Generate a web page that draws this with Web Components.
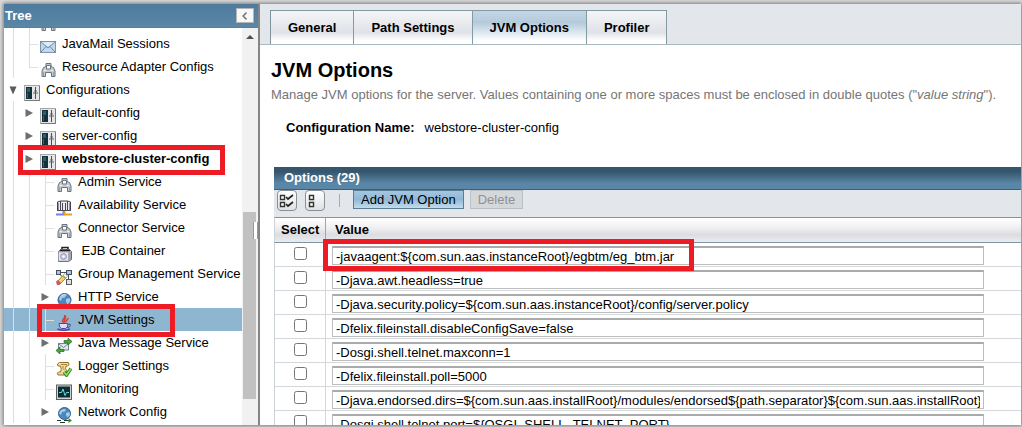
<!DOCTYPE html>
<html lang="en">
<head>
<meta charset="utf-8">
<title>JVM Options</title>
<style>
  html { height: 100%; }
  body { margin: 0; height: 100%; box-sizing: border-box; padding: 4px 1px 2px 4px; overflow: hidden; background: #dcdcdc;
    font: 13px/16px "Liberation Sans", Arial, sans-serif; color: #000; }
</style>
</head>
<body>
<admin-console>
  <tree-panel slot="side"></tree-panel>
  <tab-bar slot="main"></tab-bar>
  <page-intro slot="main"></page-intro>
  <options-table slot="main"></options-table>
</admin-console>

<script>
const define = (name, html, init) => customElements.define(name, class extends HTMLElement {
  connectedCallback() {
    if (this.shadowRoot) return;
    const t = document.createElement('template');
    t.innerHTML = typeof html === 'function' ? html(this) : html;
    this.attachShadow({ mode: 'open' }).append(t.content.cloneNode(true));
    if (init) init(this, this.shadowRoot);
  }
});

/* ---- icons ---- */
const ICONS = {
  mail: `<rect x=".5" y="2.500" width="15" height="11" fill="#c3d8ec" stroke="#7d93aa"/><path d="M1 3l7 6 7-6M1 13l5-5.5M15 13l-5-5.5" fill="none" stroke="#6d89a5"/><path d="M2 3.300h12L8 7.600z" fill="#dfecf8"/>`,
  adapter: `<path d="M6 1.500h5v3l2.500 1 1.500 3.500v5.500h-3.500v-4h-6v4H2V9l1.500-3.500 2.500-1z" fill="#c5ccd3" stroke="#6a757d"/><path d="M6.500 3.500h4v3.500h-4z" fill="#fff" stroke="#6a757d"/><path d="M4 8.500h2M11 8.500h2" stroke="#eef2f5"/><path d="M3.500 10v4M13.500 10v4" stroke="#98a3ab"/>`,
  config: `<rect x=".5" y=".5" width="15" height="15" fill="#e4e6e8" stroke="#a5a8ab"/><path d="M15.500 1v14.500H1" fill="none" stroke="#77797c"/><rect x="2" y="2" width="6" height="12" fill="#16303a"/><path d="M3 4h3M3 6h3" stroke="#3a95a0"/><path d="M3.500 8v5" stroke="#2f6b76" fill="none"/><path d="M11.500 2v12" stroke="#4b4f52"/><path d="M9 8h5M10 6h3" stroke="#64696d"/>`,
  avail: `<path d="M1.500 11V2l3-1h7l3 1v9" fill="#e9e6ee" stroke="#3f3d46"/><path d="M4.500 1v10M6.500 3v7M9.500 3v7M11.500 1v10M1 10.500h14" stroke="#4d4b55"/><path d="M2.500 3v7M13.500 3v7" stroke="#9a96a5"/><path d="M0 14.500h7.500V11" fill="none" stroke="#7d7de8" stroke-width="2"/><path d="M8.500 11v3.500H16" fill="none" stroke="#e8a413" stroke-width="2"/>`,
  ejb: `<path d="M6 4V1.500h6V4" fill="none" stroke="#222" stroke-width="1.500"/><path d="M2.500 5.500l2-2h9l2 2v8l-3 2h-10z" fill="#b7bbc0" stroke="#6a6e73"/><path d="M4 4.500h10" stroke="#222" stroke-width="1.500"/><rect x="2.500" y="6" width="10" height="9" fill="#e4e6ea" stroke="#8b8f94" stroke-width=".5"/><circle cx="7.500" cy="10.500" r="3" fill="#bcc4e0" stroke="#98a0c4"/><circle cx="7.500" cy="10.500" r="1.200" fill="#fff"/><path d="M14 6v8" stroke="#8b8f94"/>`,
  group: `<path d="M4 3.500h8M3 5l4 3M12.500 6v5" stroke="#44505c" fill="none"/><rect x=".5" y="1.500" width="4" height="4" fill="#a9c5e4" stroke="#44505c"/><rect x="10.500" y="1.500" width="5" height="4" fill="#a9c5e4" stroke="#44505c"/><rect x="10.500" y="10.500" width="5" height="5" fill="#dde0e4" stroke="#55595e"/><path d="M1 13l5.500-6 3 2.500-5.500 5.500z" fill="#f3d463" stroke="#8a6b15" stroke-width=".8"/><path d="M0 12.500l2-1.500 3 3-1.500 2H1z" fill="#d4555c"/><path d="M7 6l2-1.500 2.500 2.500L10 9z" fill="#fff" stroke="#777" stroke-width=".6"/>`,
  globe: `<circle cx="8.500" cy="8" r="6.500" fill="#4c87bd" stroke="#2f5f8f"/><path d="M4 4.500q3-3 6-1.500l-1 2.500-3 .5-1 3-2-1.500zM10 7l3.500-1 1 3-3 3.500-1.500-3z" fill="#a5cbe8"/><path d="M5 3.500q3-2 6-.500" stroke="#fff" stroke-opacity=".6" fill="none"/>`,
  network: `<circle cx="8.500" cy="6.500" r="6" fill="#4c87bd" stroke="#2f5f8f"/><path d="M4 4q3-3 6-1.500l-1 2-3 .5-1 3-2-1.500zM10 6l3.500-1 .5 3-2.500 2.500L10 8z" fill="#a5cbe8"/><path d="M1 13.500h4M4 15.500h5M8 13.500h6" stroke="#26372d"/><path d="M12.500 11l3.500 2.500-3.500 2.500z" fill="#3b8c34"/>`,
  java: `<path d="M8 7.500C3.500 5 10.500 3.500 8.500 0c3.500 3-2 4.500.5 7.500M10.500 7c-1.500-1.500 2-2.500 1.500-4" fill="none" stroke="#e03b2c" stroke-width="1.500"/><path d="M3 8.500h9q0 4.500-2.500 5h-4Q3 13 3 8.500z" fill="#dcdcfa" stroke="#4c48a0"/><path d="M12 9.500q3-1 2.500 1T11 12.500" fill="none" stroke="#4c48a0"/><path d="M1.500 14q6 2.500 12.500 0" fill="none" stroke="#4c48a0" stroke-width="1.400"/>`,
  jms: `<rect x="2.500" y="5.500" width="10" height="6.500" fill="#dfe8ef" stroke="#74848f"/><path d="M3 6l4.500 3.500L12 6" fill="none" stroke="#74848f"/><path d="M8 2.500h4V0l4 3.500-4 3.500V4.500H8zM8 13.500H4V16l-4-3.500L4 9v2.500h4z" fill="#4aa53c" stroke="#1f6a1c" stroke-width=".7"/>`,
  logger: `<path d="M3.500 1.500h9q1.500 3-1 3.500H10q-1 3 .5 5l-1 4H2q-1.500-2 .5-3h2Q6 8.500 4.500 5H2q-2-2 1.500-3.500z" fill="#f4dc9c" stroke="#94702a"/><path d="M5 3.500h6M6 6h2M6.500 8h2" stroke="#a9853c"/><path d="M8 11l2.500 3L15 7.500" fill="none" stroke="#2d7f24" stroke-width="3.400"/><path d="M8 11l2.500 3L15 7.500" fill="none" stroke="#8fe05f" stroke-width="1.600"/>`,
  monitor: `<rect x=".5" y="1" width="15" height="14.500" fill="#d2d5d8" stroke="#5b5f63"/><rect x="2" y="2.500" width="12" height="11" fill="#0d2d33"/><path d="M3 8.500h2.500L7 5l2 6.500L10.500 8.500H13" fill="none" stroke="#62e0d8"/>`,
  right: `<path d="M4.500 4l7.500 4-7.500 4z" fill="#6e6e6e"/>`,
  down: `<path d="M4.500 4.500h7L8 12.500z" fill="#5a5a5a"/>`,
  up: `<path d="M4 10l4-4 4 4z" fill="#505050"/>`,
  collapse: `<path d="M10 3.500L5.500 8l4.500 4.500" fill="none" stroke="#777" stroke-width="2"/>`,
  all: `<path d="M1.500 2.500h4v4h-4zM1.500 9.500h4v4h-4z" fill="#fff" stroke="#333" stroke-width="1.400"/><path d="M7 4l2 2 5-4M7 11l2 2 5-4" fill="none" stroke="#222" stroke-width="1.700"/>`,
  none: `<path d="M2.500 2.500h4v4h-4zM2.500 9.500h4v4h-4z" fill="#fff" stroke="#333" stroke-width="1.400"/>`
};
define('ui-icon', el => `<style>:host{display:block;flex:none;width:16px;height:16px}svg{display:block;width:100%;height:100%}</style>
  <svg viewBox="0 0 16 16" aria-hidden="true">${ICONS[el.getAttribute('name')] || ''}</svg>`);

/* ---- red callout drawn over its positioned parent ---- */
define('call-out', `<style>:host{display:block;position:absolute;z-index:3;box-sizing:border-box;border:5px solid #ed1c24;pointer-events:none}</style>`);

/* ---- frame ---- */
define('admin-console', `<style>
  :host{display:flex;height:100%;background:#fff;overflow:hidden;box-shadow:0 0 4px 1px #777}
  .side{flex:none;width:254px;display:flex;border-right:2px solid #858585;position:relative}
  .grip{position:absolute;right:0;top:218px;width:1px;height:17px;padding:0 1px;background:#fff;border:solid #999;border-width:0 1px}
  .main{flex:1;min-width:0;overflow:hidden}
</style><div class="side"><slot name="side"></slot><div class="grip"></div></div><main class="main"><slot name="main"></slot></main>`);

/* ---- tree ---- */
define('tree-node', el => {
  const level = +el.getAttribute('level'), kind = el.getAttribute('kind');
  let cells = '';
  for (let i = 0; i < level; i++) cells += '<i class="cell line"></i>';
  cells += kind === 'leaf' ? '<i class="cell line stub"></i>' : kind === 'last' ? '<i class="cell end stub"></i>'
    : `<span class="cell"><ui-icon name="${kind === 'open' ? 'down' : 'right'}"></ui-icon></span>`;
  return `<style>
    :host{display:flex;height:23px;padding-left:1px;position:relative;white-space:nowrap}
    :host([selected]){background:#8fb6d0}
    :host([current]) a{font-weight:bold}
    .cell{flex:none;width:16px;position:relative;box-sizing:border-box}
    .cell ui-icon{margin-top:4px}
    .line{background:linear-gradient(#dedede,#dedede) 8px 0/1px 100% no-repeat}
    .end{background:linear-gradient(#dedede,#dedede) 8px 0/1px 12px no-repeat}
    .stub::after{content:"";position:absolute;left:8px;top:12px;width:9px;height:1px;background:#dedede}
    .pic{margin:7px 6px 0 3px}
    a{color:inherit;text-decoration:none;line-height:23px}
  </style>${cells}<ui-icon class="pic" name="${el.getAttribute('icon')}"></ui-icon><a href="#"><slot></slot></a><slot name="mark"></slot>`;
});
define('tree-panel', `<style>
  :host{display:flex;flex-direction:column;flex:1;min-width:0}
  header{flex:none;display:flex;align-items:center;justify-content:space-between;height:23px;padding:0 4px 0 1px;background:linear-gradient(#4d7b9e,#5b87a6);border-bottom:1px solid #777;color:#fff}
  h2{margin:0;font-size:13px}
  button{display:flex;align-items:center;justify-content:center;width:18px;height:15px;padding:0;border:1px solid #b5b5b5;background:#f7f7f7}
  button ui-icon{height:12px}
  .body{flex:1;min-height:0;display:flex}
  nav{flex:1;min-width:0;overflow:hidden;display:flex;flex-direction:column;justify-content:flex-start}
  .list{margin-top:-19px}
  .bar{flex:none;width:16px;background:#f1f1f1;position:relative}
  .bar ui-icon{margin-top:1px}
  .thumb{height:187px;margin:167px 2px 0 1px;background:#c1c1c1}
  call-out.a{left:14px;right:17px;top:-2px;height:30px}
  call-out.b{left:33px;width:138px;top:-4px;height:33px}
</style>
<header><h2>Tree</h2><button type="button" aria-label="Collapse tree"><ui-icon name="collapse"></ui-icon></button></header>
<div class="body"><nav aria-label="Tree"><div class="list">
<tree-node level="1" kind="leaf" icon="adapter"></tree-node>
<tree-node level="1" kind="leaf" icon="mail">JavaMail Sessions</tree-node>
<tree-node level="1" kind="last" icon="adapter">Resource Adapter Configs</tree-node>
<tree-node level="0" kind="open" icon="config">Configurations</tree-node>
<tree-node level="1" kind="closed" icon="config">default-config</tree-node>
<tree-node level="1" kind="closed" icon="config">server-config</tree-node>
<tree-node level="1" kind="closed" icon="config" current>webstore-cluster-config<call-out class="a" slot="mark"></call-out></tree-node>
<tree-node level="2" kind="leaf" icon="adapter">Admin Service</tree-node>
<tree-node level="2" kind="leaf" icon="avail">Availability Service</tree-node>
<tree-node level="2" kind="leaf" icon="adapter">Connector Service</tree-node>
<tree-node level="2" kind="leaf" icon="ejb">&nbsp;EJB Container</tree-node>
<tree-node level="2" kind="leaf" icon="group">Group Management Service</tree-node>
<tree-node level="2" kind="closed" icon="globe">HTTP Service</tree-node>
<tree-node level="2" kind="leaf" icon="java" selected>JVM Settings<call-out class="b" slot="mark"></call-out></tree-node>
<tree-node level="2" kind="closed" icon="jms">Java Message Service</tree-node>
<tree-node level="2" kind="leaf" icon="logger">Logger Settings</tree-node>
<tree-node level="2" kind="leaf" icon="monitor">Monitoring</tree-node>
<tree-node level="2" kind="closed" icon="network">Network Config</tree-node>
</div></nav><div class="bar"><ui-icon name="up"></ui-icon><div class="thumb"></div></div></div>`);

/* ---- tabs ---- */
define('tab-bar', `<style>
  :host{display:flex;background:#e3e7eb;border-bottom:1px solid #a9b9c0;padding:6px 10px 0}
  nav{display:flex;border-left:1px solid #7f949d}
  a{box-sizing:border-box;height:34px;padding:0 17px;line-height:33px;font-weight:bold;color:#000;text-decoration:none;border:solid #8399a3;border-width:1px 1px 0 0;background:linear-gradient(#f4f5f7,#dfe2e7 65%,#fff 90%)}
  a[aria-current]{background:linear-gradient(#c4d6e4,#b4cadb 35%,#fff 90%)}
</style><nav aria-label="Sections"><a href="#">General</a><a href="#">Path Settings</a><a href="#" aria-current="page">JVM Options</a><a href="#">Profiler</a></nav>`);

/* ---- heading ---- */
define('page-intro', `<style>
  :host{display:block;padding:13px 0 0 11px}
  h1{margin:0;font-size:20px;line-height:24px}
  p{margin:5px 0 0;color:#757575;white-space:nowrap}
  dl{display:flex;gap:10px;margin:17px 0 0 15px}
  dt{font-weight:bold}
  dd{margin:0}
</style><h1>JVM Options</h1>
<p>Manage JVM options for the server. Values containing one or more spaces must be enclosed in double quotes ("<em>value string</em>").</p>
<dl><dt>Configuration Name:</dt><dd>webstore-cluster-config</dd></dl>`);

/* ---- table ---- */
const OPTIONS = ['-javaagent:${com.sun.aas.instanceRoot}/egbtm/eg_btm.jar', '-Djava.awt.headless=true',
  '-Djava.security.policy=${com.sun.aas.instanceRoot}/config/server.policy', '-Dfelix.fileinstall.disableConfigSave=false',
  '-Dosgi.shell.telnet.maxconn=1', '-Dfelix.fileinstall.poll=5000',
  '-Djava.endorsed.dirs=${com.sun.aas.installRoot}/modules/endorsed${path.separator}${com.sun.aas.installRoot}/lib/endorsed',
  '-Dosgi.shell.telnet.port=${OSGI_SHELL_TELNET_PORT}'];
define('options-table', () => `<style>
  :host{display:block;margin:31px 0 0 14px}
  h2{margin:0;padding-left:10px;font-size:13px;line-height:22px;color:#fff;background:linear-gradient(#35566c 20%,#5a87a8 75%);border-bottom:1px solid #3c6078}
  .tools{display:flex;align-items:flex-start;height:27px;padding-left:3px;background:#e3e7eb}
  button{box-sizing:border-box;font:13px/16px "Liberation Sans",Arial,sans-serif;padding:0 7px;height:19px}
  .sq{display:flex;align-items:center;justify-content:center;width:20px;height:21px;padding:0;margin-right:8px;border:1px solid #8a8f93;border-radius:4px;background:linear-gradient(#fff,#dfe1e4)}
  .sep{width:1px;height:13px;margin:4px 13px 0 6px;background:#aaa}
  .add{border:1px solid #5c7c90;background:linear-gradient(#a5c6de,#8fb9d7 50%,#c3dcec);color:#000}
  .del{margin-left:6px;border:1px solid #bcc0c3;background:#d5d8db;color:#8f9295}
  table{width:100%;border-collapse:separate;border-spacing:0;table-layout:fixed}
  th{box-sizing:border-box;height:26px;padding:0 0 0 9px;text-align:left;border:solid #7f959f;border-width:1px 0;background:linear-gradient(#fff,#f0f0f2 40%,#dcdde1 70%,#ececef)}
  th:first-child{width:52px;padding-left:6px;border-right:1px solid #9aa9b0}
  td{box-sizing:border-box;height:24px;padding:3px 37px 1px 6px;border-bottom:1px solid #d3d9db;vertical-align:top;position:relative}
  td:first-child{padding:4px 0 0;border-right:1px solid #d3d9db}
  td:first-child,th:first-child{border-left:1px solid #ccd4d8}
  input[type=checkbox]{display:block;margin:0 auto;width:13px;height:13px}
  input[type=text]{display:block;box-sizing:border-box;width:100%;height:19px;margin:0;padding:0 3px;font:13px "Liberation Sans",Arial,sans-serif;color:#000;background:#fff;border:1px solid #bdbdbd;border-top:2px solid #aaa;border-radius:0;outline:none}
  call-out{left:-3px;top:-4px;width:371px;height:32px}
</style>
<h2>Options (29)</h2>
<div class="tools"><button class="sq" type="button" aria-label="Select all"><ui-icon name="all"></ui-icon></button><button class="sq" type="button" aria-label="Deselect all"><ui-icon name="none"></ui-icon></button><span class="sep"></span><button class="add" type="button">Add JVM Option</button><button class="del" type="button" disabled>Delete</button></div>
<table><thead><tr><th>Select</th><th>Value</th></tr></thead><tbody>${OPTIONS.map((o, i) =>
  `<tr><td><input type="checkbox" aria-label="Select option ${i + 1}"></td><td><input type="text" aria-label="Option ${i + 1}" value="${o}">${i ? '' : '<call-out></call-out>'}</td></tr>`).join('')}</tbody></table>`);
</script>
</body>
</html>
